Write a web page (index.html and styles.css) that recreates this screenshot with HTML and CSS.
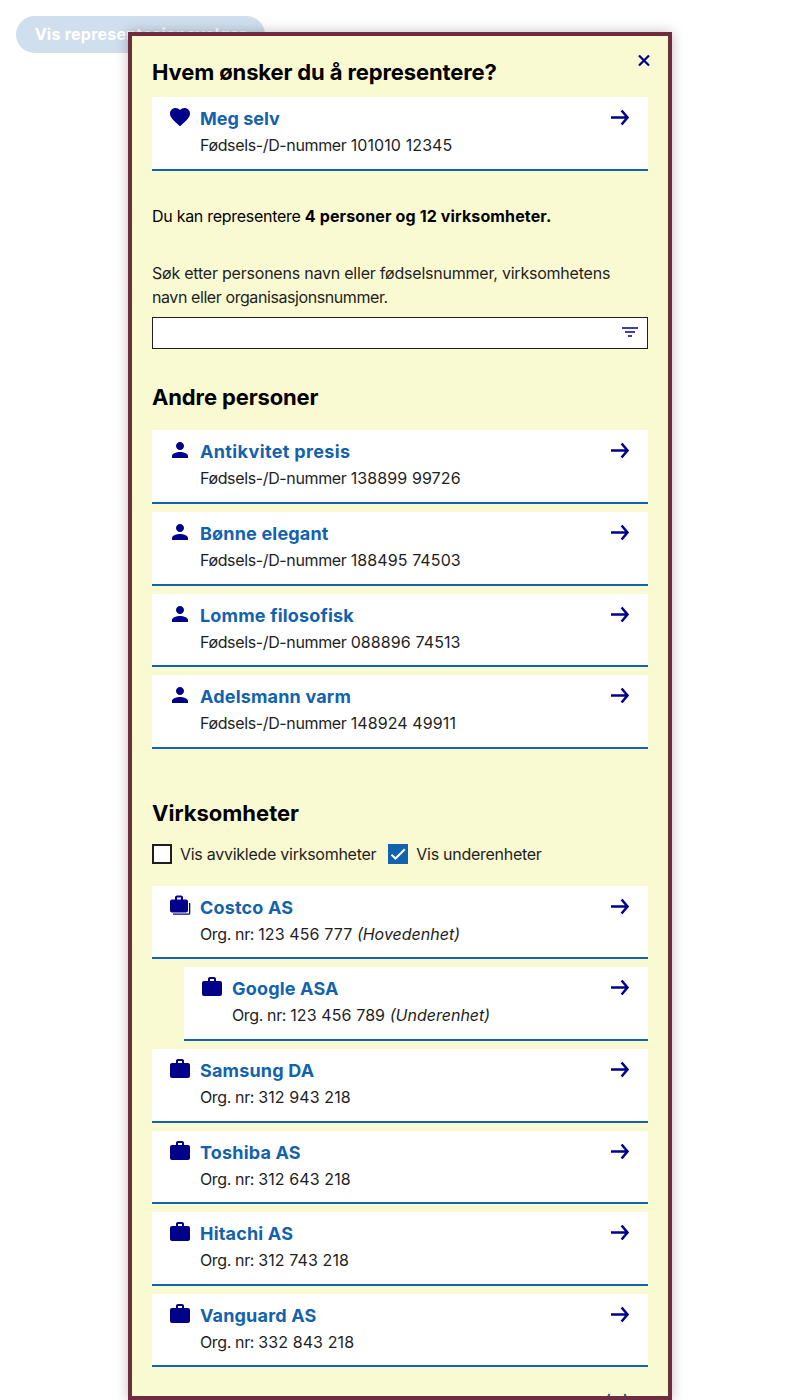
FILE: index.html
```html
<!DOCTYPE html>
<html lang="no">
<head>
<meta charset="utf-8">
<title>Representasjonsvelger</title>
<link rel="stylesheet" href="styles.css">
</head>
<body>
<svg class="symbols" aria-hidden="true">
  <symbol id="heart" viewBox="0 0 24 24"><path d="M12 21.35l-1.45-1.32C5.4 15.36 2 12.28 2 8.5 2 5.42 4.42 3 7.5 3c1.74 0 3.41.81 4.5 2.09C13.09 3.81 14.76 3 16.5 3 19.58 3 22 5.42 22 8.5c0 3.78-3.4 6.86-8.55 11.54L12 21.35z"/></symbol>
  <symbol id="person" viewBox="0 0 24 24"><path d="M12 12c2.21 0 4-1.79 4-4s-1.79-4-4-4-4 1.790-4 4 1.790 4 4 4zm0 2c-2.670 0-8 1.340-8 4v2h16v-2c0-2.660-5.330-4-8-4z"/></symbol>
  <symbol id="case" viewBox="0 0 24 24"><path d="M20 6h-4V4c0-1.110-.890-2-2-2h-4c-1.110 0-2 .890-2 2v2H4c-1.110 0-2 .890-2 2v11c0 1.110.890 2 2 2h16c1.110 0 2-.890 2-2V8c0-1.110-.890-2-2-2zM10 4h4v2h-4z"/></symbol>
  <symbol id="cases" viewBox="0 0 24 24"><path d="M18 5.500h-3v-2c0-1.100-.9-2-2-2h-4c-1.100 0-2 .9-2 2v2H4c-1.100 0-2 .9-2 2V16.500c0 1.100.9 2 2 2h14c1.100 0 2-.9 2-2V7.500c0-1.100-.9-2-2-2zM9 5.500V3.500h4v2zM21 9h1.300v10.300c0 .9-.7 1.500-1.500 1.500H5v-1.400h16z"/></symbol>
  <symbol id="arrow" viewBox="0 0 24 24"><path d="M3 12.500h16.500M13.600 5.500L19.500 12.500l-5.900 7" class="stroke"/></symbol>
</svg>
<button class="open-button">Vis representasjonsvelger</button>
<div class="dialog">
  <button class="close" aria-label="Lukk"><svg viewBox="0 0 12 12"><path d="M1 1.500l10 10M11 1.500L1 11.500" class="stroke"/></svg></button>
  <h2 class="heading">Hvem ønsker du å representere?</h2>
  <a class="card"><svg class="icon"><use href="#heart"/></svg><span class="body"><b class="name tight">Meg selv</b><span class="info"><span class="kind">Fødsels-/D-nummer </span>101010 12345</span></span><svg class="icon"><use href="#arrow"/></svg></a>
  <p class="summary"><span class="kind">Du kan representere </span><b>4 personer og 12 virksomheter.</b></p>
  <label class="label">Søk etter personens navn eller fødselsnummer, virksomhetens navn eller organisasjonsnummer.</label>
  <div class="search"><svg class="filter" viewBox="0 0 16 12"><path d="M0 2h16M3 6h10M6 10h4" class="stroke"/></svg></div>
  <h2 class="heading people-heading">Andre personer</h2>
  <div class="list">
    <a class="card"><svg class="icon"><use href="#person"/></svg><span class="body"><b class="name wide">Antikvitet presis</b><span class="info"><span class="kind">Fødsels-/D-nummer </span>138899 99726</span></span><svg class="icon"><use href="#arrow"/></svg></a>
    <a class="card"><svg class="icon"><use href="#person"/></svg><span class="body"><b class="name">Bønne elegant</b><span class="info"><span class="kind">Fødsels-/D-nummer </span>188495 74503</span></span><svg class="icon"><use href="#arrow"/></svg></a>
    <a class="card"><svg class="icon"><use href="#person"/></svg><span class="body"><b class="name">Lomme filosofisk</b><span class="info"><span class="kind">Fødsels-/D-nummer </span>088896 74513</span></span><svg class="icon"><use href="#arrow"/></svg></a>
    <a class="card"><svg class="icon"><use href="#person"/></svg><span class="body"><b class="name">Adelsmann varm</b><span class="info"><span class="kind">Fødsels-/D-nummer </span>148924 49911</span></span><svg class="icon"><use href="#arrow"/></svg></a>
  </div>
  <h2 class="heading company-heading">Virksomheter</h2>
  <div class="checks">
    <label class="check"><span class="box"></span>Vis avviklede virksomheter</label>
    <label class="check"><span class="box checked"><svg viewBox="0 0 20 20"><path d="M3.500 10.700l4 3.800 9.300-9.300" class="stroke"/></svg></span>Vis underenheter</label>
  </div>
  <div class="list">
    <a class="card"><svg class="icon"><use href="#cases"/></svg><span class="body"><b class="name">Costco AS</b><span class="info"><span class="kind">Org. nr: </span>123 456 777 <i>(Hovedenhet)</i></span></span><svg class="icon"><use href="#arrow"/></svg></a>
    <a class="card sub"><svg class="icon"><use href="#case"/></svg><span class="body"><b class="name">Google ASA</b><span class="info"><span class="kind">Org. nr: </span>123 456 789 <i>(Underenhet)</i></span></span><svg class="icon"><use href="#arrow"/></svg></a>
    <a class="card"><svg class="icon"><use href="#case"/></svg><span class="body"><b class="name">Samsung DA</b><span class="info"><span class="kind">Org. nr: </span>312 943 218</span></span><svg class="icon"><use href="#arrow"/></svg></a>
    <a class="card"><svg class="icon"><use href="#case"/></svg><span class="body"><b class="name">Toshiba AS</b><span class="info"><span class="kind">Org. nr: </span>312 643 218</span></span><svg class="icon"><use href="#arrow"/></svg></a>
    <a class="card"><svg class="icon"><use href="#case"/></svg><span class="body"><b class="name">Hitachi AS</b><span class="info"><span class="kind">Org. nr: </span>312 743 218</span></span><svg class="icon"><use href="#arrow"/></svg></a>
    <a class="card"><svg class="icon"><use href="#case"/></svg><span class="body"><b class="name">Vanguard AS</b><span class="info"><span class="kind">Org. nr: </span>332 843 218</span></span><svg class="icon"><use href="#arrow"/></svg></a>
  </div>
  <div class="more"><svg viewBox="0 0 24 24"><path d="M3.500 3C.5 8 .5 16 3.500 21M18.500 3c3 5 3 13 0 18" class="stroke"/></svg></div>
</div>
</body>
</html>
```
FILE: styles.css
```css
* { box-sizing: border-box; }
body { margin: 0; padding: 16px; height: 1400px; overflow: hidden; background: #fff; font-family: Inter, sans-serif; font-size: 16px; font-weight: 400; line-height: 24px; color: #1e1e1e; }
b { font-weight: 700; }
.symbols { position: absolute; width: 0; height: 0; }
.open-button { display: block; width: 249px; height: 37px; padding: 0; border: 0; border-radius: 19px; background: #d0dfee; color: #fff; font: 700 16px/37px Inter, sans-serif; letter-spacing: .25px; }
.dialog { position: absolute; left: 128px; top: 32px; width: 544px; height: 1368px; overflow: hidden; border: 4px solid #702c3f; background: #fafad2; padding: 20px; box-shadow: 0 0 12px rgba(0,0,0,.25); }
.close { position: absolute; right: 18px; top: 18px; width: 12px; height: 12px; padding: 0; border: 0; background: none; }
.close svg { display: block; width: 12px; height: 12px; overflow: visible; }
.close .stroke { stroke-width: 2.200; }
.stroke { fill: none; stroke: #00008b; stroke-width: 2.500; }
.heading { margin: 0; font-size: 22px; line-height: 33px; font-weight: 700; letter-spacing: -.13px; color: #000; }
.heading + .card { margin-top: 8px; }
.card { display: flex; height: 73.6px; padding: 8px 16px 0; background: #fff; border-bottom: 2px solid #1362ae; }
.icon { flex: none; width: 24px; height: 24px; fill: #00008b; }
.body { flex: 1; padding-left: 8px; }
.name { display: block; font-size: 18px; line-height: 27px; letter-spacing: .18px; color: #1362ae; }
.name.wide { letter-spacing: .36px; }
.name.tight { letter-spacing: 0; }
.info { display: block; line-height: 27px; letter-spacing: .1px; }
.kind { letter-spacing: -.36px; }
.info i { letter-spacing: 0; }
.summary { margin: 33.4px 0 33px; color: #000; }
.summary .kind { letter-spacing: -.28px; }
.summary b { letter-spacing: .13px; }
.label { display: block; letter-spacing: -.42px; }
.label::first-line { letter-spacing: -.22px; }
.search { display: flex; justify-content: flex-end; height: 32px; margin-top: 8px; padding: 8px 9px; border: 1px solid #1e1e1e; background: #fff; }
.filter { width: 16px; height: 12px; }
.filter .stroke { stroke-width: 1.700; }
.people-heading { margin: 32.4px 0 16px; }
.list { display: grid; gap: 8px; }
.company-heading { margin-top: 48.6px; letter-spacing: 0; }
.checks { display: flex; gap: 12px; margin: 12px 0 19.5px; }
.check { display: flex; align-items: center; gap: 8px; letter-spacing: -.27px; }
.box { width: 20px; height: 20px; border: 2px solid #1e1e1e; background: #fff; }
.checked { border: 0; background: #1362ae; }
.checked svg { display: block; width: 20px; height: 20px; }
.checked .stroke { stroke: #fff; stroke-width: 2; }
.sub { margin-left: 32px; }
.more { display: flex; justify-content: flex-end; margin-top: 24px; padding-right: 18px; }
.more svg { width: 24px; height: 24px; }
.more .stroke { stroke: #1362ae; stroke-width: 2; }
```
